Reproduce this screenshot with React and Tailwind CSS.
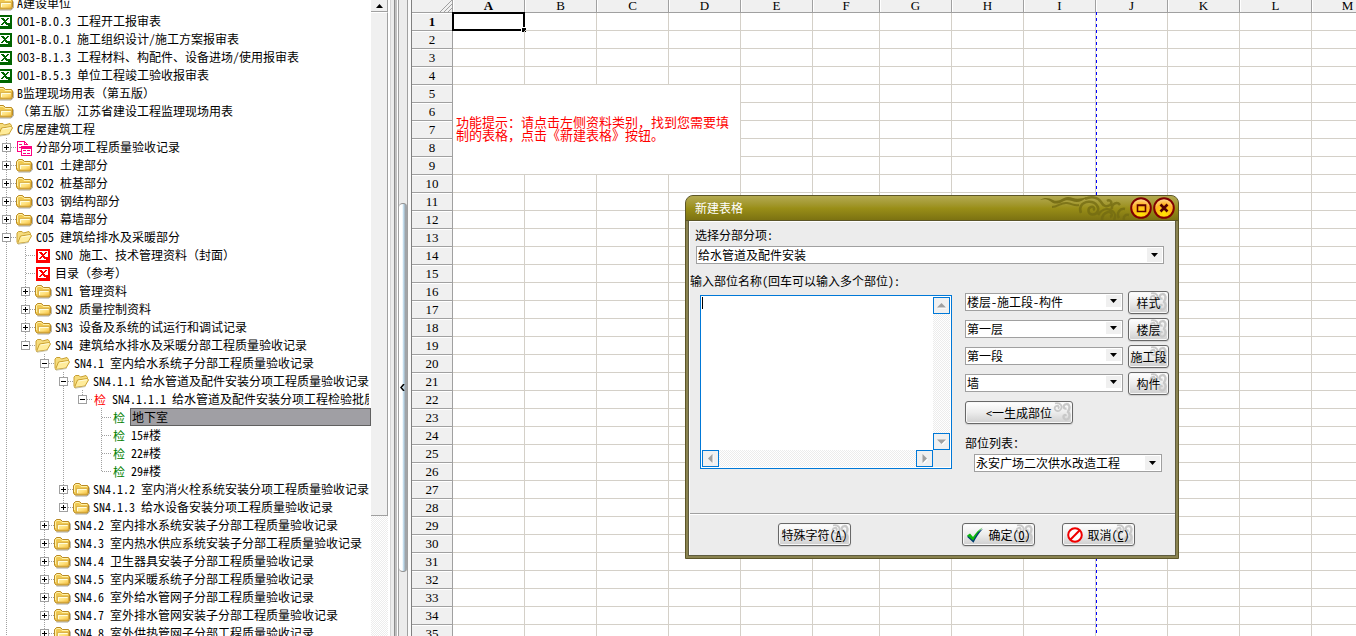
import React from "react";

/* guides: one character per indent cell
   "|" line, " " blank, "+"/"-" toggle, "t" tee, "l" corner; "p"/"m" = toggle with no line below */
const TREE = [
  ["", "folder", "A建设单位"],
  ["", "xls", "001-B.0.3 工程开工报审表"],
  ["", "xls", "001-B.0.1 施工组织设计/施工方案报审表"],
  ["", "xls", "003-B.1.3 工程材料、构配件、设备进场/使用报审表"],
  ["", "xls", "001-B.5.3 单位工程竣工验收报审表"],
  ["", "folder", "B监理现场用表（第五版）"],
  ["", "folder", "（第五版）江苏省建设工程监理现场用表"],
  ["", "open", "C房屋建筑工程"],
  ["+", "form", "分部分项工程质量验收记录"],
  ["+", "folder", "C01 土建部分"],
  ["+", "folder", "C02 桩基部分"],
  ["+", "folder", "C03 钢结构部分"],
  ["+", "folder", "C04 幕墙部分"],
  ["-", "open", "C05 建筑给排水及采暖部分"],
  ["|t", "redxls", "SN0 施工、技术管理资料（封面）"],
  ["|t", "redxls", "目录（参考）"],
  ["|+", "folder", "SN1 管理资料"],
  ["|+", "folder", "SN2 质量控制资料"],
  ["|+", "folder", "SN3 设备及系统的试运行和调试记录"],
  ["|m", "open", "SN4 建筑给水排水及采暖分部工程质量验收记录"],
  ["| -", "open", "SN4.1 室内给水系统子分部工程质量验收记录"],
  ["| |-", "open", "SN4.1.1 给水管道及配件安装分项工程质量验收记录"],
  ["| ||m", "redcheck", "SN4.1.1.1 给水管道及配件安装分项工程检验批质"],
  ["| || t", "check", "地下室", true],
  ["| || t", "check", "15#楼"],
  ["| || t", "check", "22#楼"],
  ["| || l", "check", "29#楼"],
  ["| |+", "folder", "SN4.1.2 室内消火栓系统安装分项工程质量验收记录"],
  ["| |p", "folder", "SN4.1.3 给水设备安装分项工程质量验收记录"],
  ["| +", "folder", "SN4.2 室内排水系统安装子分部工程质量验收记录"],
  ["| +", "folder", "SN4.3 室内热水供应系统安装子分部工程质量验收记录"],
  ["| +", "folder", "SN4.4 卫生器具安装子分部工程质量验收记录"],
  ["| +", "folder", "SN4.5 室内采暖系统子分部工程质量验收记录"],
  ["| +", "folder", "SN4.6 室外给水管网子分部工程质量验收记录"],
  ["| +", "folder", "SN4.7 室外排水管网安装子分部工程质量验收记录"],
  ["| +", "folder", "SN4.8 室外供热管网子分部工程质量验收记录"],
];

function Guide({ kind }) {
  const toggle = "+-pm".includes(kind);
  const down = "|t+-".includes(kind);
  const up = kind !== " ";
  const art = (
    <svg width="19" height="18" viewBox="0 0 19 18" shapeRendering="crispEdges" className="block" aria-hidden="true">
      <g stroke="#a0a0a0" strokeDasharray="1 1" fill="none">
        {up && <path d="M9.5 0V9" />}
        {down && <path d="M9.5 10V18" />}
        {up && kind !== "|" && <path d="M10 9.5H19" />}
      </g>
      {toggle && (
        <>
          <rect x="5.5" y="5.5" width="8" height="8" fill="#fff" stroke="#a0a0a0" />
          <path d={kind === "+" || kind === "p" ? "M7 9.5h5M9.5 7v5" : "M7 9.5h5"} stroke="#000" />
        </>
      )}
    </svg>
  );
  return toggle ? (
    <button type="button" aria-label="展开或折叠" className="shrink-0">{art}</button>
  ) : (
    <span className="shrink-0">{art}</span>
  );
}

function NodeIcon({ type }) {
  if (type === "check" || type === "redcheck") {
    return (
      <span className={"w-[19px] shrink-0 pl-[2px] pt-px " + (type === "check" ? "text-[#008000]" : "text-[#f00]")}>检</span>
    );
  }
  return (
    <svg width="19" height="18" viewBox="0 0 19 18" className="block shrink-0" aria-hidden="true">
      {type === "folder" && (
        <>
          <defs>
            <linearGradient id="folderFront" x1="0" y1="0" x2="1" y2="1">
              <stop offset="0" stopColor="#fff6b0" />
              <stop offset=".55" stopColor="#ffe07a" />
              <stop offset="1" stopColor="#f0b838" />
            </linearGradient>
          </defs>
          <path d="M2.500 16H14l2.300-2V7.500" fill="none" stroke="#a8a8a0" />
          <path d="M.5 13V5.500L2.500 3.500h4l2 2H14.500l1 1.500V13L14 15H2z" fill="#f0c850" stroke="#b98a24" />
          <path d="M1.500 12V6l1.300-1.500H6l2 2H14" fill="none" stroke="#fff2a8" />
          <path d="M3.500 14V8.500H14.500V13L13.500 14.300z" fill="url(#folderFront)" stroke="#c89830" strokeWidth=".6" />
          <path d="M4.500 13V9.500H13.500" fill="none" stroke="#fffcdc" />
        </>
      )}
      {type === "open" && (
        <>
          <path d="M1 14.500V5L2.500 3.500H6l1.500 1.500 5.500-1.500 1.500 2V8" fill="#f6dc7c" stroke="#c9a032" />
          <path d="M1.500 15.500L4.500 8 14.500 6.500 15.500 8 12 14z" fill="#ffec9a" stroke="#c9a032" />
          <path d="M5.500 9l8.500-1.300" stroke="#fffbd8" />
          <path d="M2 16.200L12.500 14.500" stroke="#c9c4a8" />
        </>
      )}
      {(type === "xls" || type === "redxls") && (
        <g shapeRendering="crispEdges">
          <rect x="1" y="3" width="14" height="14" fill={type === "xls" ? "#006400" : "#f00"} />
          <rect x="3" y="5" width="10" height="9" fill="#fff" />
          <path d="M4 6h3v1h1v1h1v-1h1v-1h2v1h-1v1h-1v1h-1v1h1v1h1v1h1v1h-3v-1h-1v-1h-1v1h-1v1h-2v-1h1v-1h1v-1h1v-1h-1v-1h-1v-1h-1z" fill={type === "xls" ? "#006400" : "#f00"} />
          <rect x="11" y="11" width="3" height="4" fill={type === "xls" ? "#006400" : "#f00"} />
        </g>
      )}
      {type === "form" && (
        <g fill="none" stroke="#ff0080" shapeRendering="crispEdges">
          <path d="M5 13.500H1.500V3.500H8.500l3 3" />
          <path d="M8.500 3.500v3h3M3 6.500h3M3 9.500h2" />
          <rect x="5.500" y="8.500" width="10" height="9" fill="#fff" />
          <path d="M5 10h11" strokeWidth="2" />
          <path d="M7 12.500h3M11 12.500h3M7 15.500h3M11 15.500h3" />
        </g>
      )}
    </svg>
  );
}

function TreePanel() {
  return (
    <nav className="w-[371px] shrink-0 overflow-hidden bg-white" aria-label="资料类别">
      <ul className="-ml-[3px] -mt-[6px]">
        {TREE.map(([guides, type, label, selected]) => (
          <li key={label} className="flex h-[18px] items-center">
            {guides.split("").map((g, i) => (
              <Guide key={i} kind={g} />
            ))}
            <NodeIcon type={type} />
            <span
              className={
                selected
                  ? "h-[18px] flex-1 border border-[#606060] bg-[#a09fa4] pl-px leading-4"
                  : "mr-[2px] flex-1 overflow-hidden pl-px"
              }
            >
              {label}
            </span>
          </li>
        ))}
      </ul>
    </nav>
  );
}

const DITHER = "bg-[repeating-conic-gradient(#ffffff_0_25%,#ececec_0_50%)] bg-[length:2px_2px]";

function TreeScrollbar() {
  return (
    <div className="flex w-[17px] shrink-0 flex-col bg-[#f0f0f0]">
      <button type="button" aria-label="向上" className="flex h-[12px] shrink-0 items-center justify-center border-b border-r border-[#a0a0a0] bg-[#f0f0f0]">
        <svg width="7" height="4" viewBox="0 0 7 4" aria-hidden="true"><path d="M0 4L3.500 0 7 4z" /></svg>
      </button>
      <div className="basis-[504px] border-b border-r border-t border-[#a0a0a0] border-t-white bg-[#f0f0f0]" />
      <div className={"flex-1 " + DITHER} />
    </div>
  );
}

function Splitter() {
  return (
    <div className="flex w-[24px] shrink-0 bg-[#ececec]">
      <div className="w-[2px] bg-white" />
      <div className="w-[1px] bg-[#d4d4d4]" />
      <div className="w-[3px]" />
      <div className="w-[1px] bg-[#8c8c8c]" />
      <div className="w-[2px] bg-[#c0c0c0]" />
      <div className="w-[1px] bg-white" />
      <div className="flex w-[10px] flex-col border-x border-[#a0a0a0] bg-[#ececec] pt-[203px]">
        <div className="flex basis-[369px] items-center rounded-sm border-y border-[#909090] bg-linear-to-r from-white from-40% via-[#b4d4e8] via-60% to-[#a0a4a8] to-80%">
          <svg width="5" height="7" viewBox="0 0 5 7" className="ml-[1px]" aria-hidden="true">
            <path d="M4 0L1 3.500 4 7" fill="none" stroke="#000" strokeWidth="1.500" />
          </svg>
        </div>
      </div>
      <div className="w-[3px] bg-[#fafafa]" />
      <div className="w-[1px] bg-[#808080]" />
    </div>
  );
}

const COLS = "ABCDEFGHIJKLM".split("");
const ROWS = Array.from({ length: 35 }, (_, i) => i + 1);

function Sheet() {
  return (
    <main className="relative min-w-0 flex-1 overflow-hidden bg-white">
      <table className="w-[972px] table-fixed border-separate border-spacing-0 text-center">
        <colgroup>
          <col className="w-[41px]" />
          {COLS.map((c) => (
            <col key={c} className={c === "F" ? "w-[67px]" : "w-[72px]"} />
          ))}
        </colgroup>
        <thead>
          <tr className="h-[13px]">
            <th className="border-b border-r border-[#a0a0a0] bg-[#f0f0f0] p-0">
              <svg width="12" height="12" viewBox="0 0 12 12" className="ml-auto block" stroke="#a0a0a0" aria-hidden="true">
                <path d="M0 12L12 0M4 12L12 4M8 12L12 8" />
              </svg>
            </th>
            {COLS.map((c) => (
              <th
                key={c}
                scope="col"
                className={
                  "border-b border-r border-[#a0a0a0] bg-[#f0f0f0] p-0 font-['Liberation_Serif',serif] text-[13px] leading-3 shadow-[inset_1px_0_0_#fff] " +
                  (c === "A" ? "font-bold" : "font-normal")
                }
              >
                {c}
              </th>
            ))}
          </tr>
        </thead>
        <tbody>
          {ROWS.map((r) => (
            <tr key={r} className="h-[18px]">
              <th
                scope="row"
                className={
                  "border-b border-r border-[#a0a0a0] bg-[#f0f0f0] p-0 font-['Liberation_Serif',serif] text-[13px] leading-4 shadow-[inset_0_1px_0_#fff] " +
                  (r === 1 ? "font-bold" : "font-normal")
                }
              >
                {r}
              </th>
              {COLS.map((c, i) => {
                if (r >= 5 && r <= 9 && i < 4) {
                  return r === 5 && i === 0 ? (
                    <td key={c} rowSpan={5} colSpan={4} className="border-b border-r border-[#d4d0c8] p-0 pb-[4px] pl-[3px] text-left text-[13px] leading-[13px] text-[#f00]">
                      功能提示：请点击左侧资料类别，找到您需要填
                      <br />
                      制的表格，点击《新建表格》按钮。
                    </td>
                  ) : null;
                }
                return (
                  <td key={c} className="relative border-b border-r border-[#d4d0c8] p-0">
                    {r === 1 && i === 0 && (
                      <span className="absolute -inset-x-px -inset-y-px border-2 border-black">
                        <span className="absolute -bottom-[3px] -right-[3px] size-[5px] border-l border-t border-white bg-black" />
                      </span>
                    )}
                  </td>
                );
              })}
            </tr>
          ))}
        </tbody>
      </table>
      <div className="absolute bottom-0 left-[684px] top-[12px] w-px bg-[repeating-linear-gradient(#0000ff_0_3px,#ffffff_3px_6px)]" />
    </main>
  );
}

function Combo({ id, label, value, className }) {
  return (
    <div className={"relative " + className}>
      <select id={id} aria-label={label} defaultValue={value} className="block h-[18px] w-full appearance-none border border-[#a0a0a0] bg-white pl-px pr-4 leading-4 text-black outline-none">
        <option>{value}</option>
      </select>
      <span className="pointer-events-none absolute bottom-[2px] right-[2px] top-[2px] flex w-[15px] items-center justify-center bg-[#f0f0f0]">
        <svg width="7" height="4" viewBox="0 0 7 4" aria-hidden="true"><path d="M0 0h7L3.500 4z" /></svg>
      </span>
    </div>
  );
}

function SkinButton({ children, className }) {
  return (
    <button
      type="button"
      className={
        "relative flex h-[23px] items-center justify-center rounded-[3px] border border-[#686868] bg-linear-to-b from-white via-[#ececec] to-[#cfcfcf] text-black shadow-[inset_0_0_0_1px_#f8f8f8,0_1px_1px_#d0d0d0] " +
        className
      }
    >
      <svg width="20" height="19" viewBox="0 0 20 19" className="absolute right-0 top-0" fill="none" stroke="#c8c8c8" aria-hidden="true">
        <path d="M6 6.500C7.500 5.500 6.500 3.500 4.800 3.800 2.500 4.200 1.800 7 4 8.500c2.500 1.500 6-.5 5.500-4C9.300 2 6 .5 3 1.500" strokeWidth="1.800" />
        <path d="M14.500 6.500c-2 .5-3.500-1-2.500-3 1-1.800 4-2 5 0 1.500 2.500-.5 4.500-1 6.500 2 1.500 2 4.500.5 6.500-2 2-5 1-5-1.500 0-2 2-2.500 2.500-1" strokeWidth="2.400" />
      </svg>
      <span className="relative flex items-center gap-[4px] whitespace-nowrap">{children}</span>
    </button>
  );
}

function ScrollArrow({ d, label }) {
  return (
    <button type="button" aria-label={label} className="flex size-[17px] shrink-0 items-center justify-center border border-[#0078d7] bg-[#f0f0f0]">
      <svg width="11" height="11" viewBox="0 0 11 11" aria-hidden="true">
        <path d={d} fill="#fff" transform="translate(1 1)" />
        <path d={d} fill="#a0a0a0" />
      </svg>
    </button>
  );
}

function TitleButton({ label, children }) {
  return (
    <button type="button" aria-label={label} className="block size-[22px]">
      <svg width="22" height="22" viewBox="0 0 22 22" aria-hidden="true">
        <defs>
          <radialGradient id={"g" + label} cx=".5" cy=".8" r=".8">
            <stop offset="0" stopColor="#ffe800" />
            <stop offset=".6" stopColor="#ffb020" />
            <stop offset="1" stopColor="#ffe0a0" />
          </radialGradient>
        </defs>
        <circle cx="11" cy="11" r="9.800" fill={`url(#g${label})`} stroke="#800000" strokeWidth="2" />
        {children}
      </svg>
    </button>
  );
}

const PARTS = [
  ["楼层-施工段-构件", "样式"],
  ["第一层", "楼层"],
  ["第一段", "施工段"],
  ["墙", "构件"],
];

function Dialog() {
  return (
    <section role="dialog" aria-label="新建表格" className="absolute left-[685px] top-[195px] w-[494px] overflow-hidden rounded-t-lg border border-[#5c5628] bg-[#8a8350]">
      <header className="relative flex h-[25px] items-center border-b border-[#5c5628] bg-linear-to-b from-[#b4aa50] via-[#9a8f18] to-[#7c7212] pl-[9px] pr-[3px]">
        <svg width="104" height="24" viewBox="0 0 104 24" className="absolute right-[34px] top-0" fill="none" stroke="#716912" strokeOpacity=".75" aria-hidden="true">
          <path d="M0 4c5-3 9-2 13 0s7 0 11-2c3-1.500 6-1 9 0s8 1 14-1c-5 5-10 6-15 4-4-1.500-7-1-10 1-4 2.500-9 2-12-1-3-2-6-2-10-1z" fill="#716912" stroke="none" fillOpacity=".85" />
          <path d="M12 11c6 0 9-5 15-4s7 3 12 2" strokeWidth="2" />
          <path d="M53 14c2-1 1-4-2-3-4 1.500-3 7 1 7.500 5 .5 8-5 5-9C53 4 44 5 41 10c-1 2-1 5 0 7" strokeWidth="2.500" />
          <path d="M45 3c6-3 13-2 16 3s6 5 9 3c3-2.500 0-6-3-4" strokeWidth="2.500" />
          <path d="M62 24c0-4 2-7 6-8 4-.5 5 4 2 5M58 19c3-5 8-7 13-5 4 2 5 6 3 10M72 13c-1-5 5-8 8-4M79 22c-3-5 1-10 6-9M84 24c-1-4 2-6 5-5" strokeWidth="2.500" />
        </svg>
        <h2 className="flex-1 text-white">新建表格</h2>
        <div className="relative flex gap-px">
          <TitleButton label="最大化"><path d="M7.500 8h8v6.500h-8zM7 8.500h9" fill="none" stroke="#600000" strokeWidth="1.600" /></TitleButton>
          <TitleButton label="关闭"><path d="M7.500 7.500l7 7M14.500 7.500l-7 7" stroke="#500000" strokeWidth="2.600" /></TitleButton>
        </div>
      </header>
      <div className="mx-[2px] mb-[2px] border border-t-0 border-[#5e5c40]">
        <div className="border border-r-0 border-b-0 border-white bg-[#ececec]">
          <label htmlFor="item" className="block pl-[5px] pt-[4px]">选择分部分项:</label>
          <Combo id="item" value="给水管道及配件安装" className="ml-[6px] mr-[11px] mt-[2px]" />
          <label htmlFor="names" className="mt-[8px] block">输入部位名称(回车可以输入多个部位):</label>
          <div className="flex gap-[13px] pl-[10px] pr-[5px]">
            <div className="relative mt-[5px] grid h-[174px] w-[252px] shrink-0 grid-cols-[1fr_17px] grid-rows-[1fr_17px] border border-[#0078d7] bg-white p-px">
              <textarea id="names" className="block size-full resize-none overflow-hidden bg-white outline-none" />
              <span className="absolute left-[1px] top-[1px] h-[12px] w-px bg-black" />
              <div className={"flex flex-col justify-between " + DITHER}>
                <ScrollArrow label="向上" d="M1 7.500h9L5.500 3z" />
                <ScrollArrow label="向下" d="M1 3.500h9L5.500 8z" />
              </div>
              <div className={"flex justify-between " + DITHER}>
                <ScrollArrow label="向左" d="M7.500 1v9L3 5.500z" />
                <ScrollArrow label="向右" d="M3.500 1v9L8 5.500z" />
              </div>
              <div className="bg-[#ececec]" />
            </div>
            <div className="mt-px flex-1">
              <div className="grid gap-[4px]">
                {PARTS.map(([value, action]) => (
                  <div key={action} className="flex gap-[5px]">
                    <Combo label={action} value={value} className="w-[158px] pt-[2px] [&>span]:top-[4px] [&>span]:bottom-[7px]" />
                    <SkinButton className="w-[41px]">{action}</SkinButton>
                  </div>
                ))}
              </div>
              <SkinButton className="mt-[6px] w-[108px]">&lt;一生成部位</SkinButton>
              <label htmlFor="list" className="mt-[10px] block">部位列表：</label>
              <Combo id="list" value="永安广场二次供水改造工程" className="ml-[9px] mt-[2px] w-[188px]" />
            </div>
          </div>
          <footer className="mt-[41px] flex justify-between border-t border-[#a0a0a0] py-[9px] pl-[88px] pr-[40px] shadow-[inset_0_1px_0_#fff]">
            <SkinButton className="w-[73px]">
              <span>特殊字符(<u>A</u>)</span>
            </SkinButton>
            <div className="flex gap-[27px]">
              <SkinButton className="w-[73px]">
                <svg width="18" height="16" viewBox="0 0 18 16" aria-hidden="true">
                  <path d="M1 9l3-2 3 3.500C10 6 13 3 17 1 13 5 10 10 7.500 15z" fill="#003c70" transform="translate(0 .8)" />
                  <path d="M1 8.500l3-2 3 3.500C10 5.500 13 2.500 16.500.5 12.500 4.500 9.500 9 7.200 13.500z" fill="#0cb80c" />
                </svg>
                <span>确定(<u>O</u>)</span>
              </SkinButton>
              <SkinButton className="w-[73px]">
                <svg width="16" height="16" viewBox="0 0 16 16" fill="none" stroke="#f00000" strokeWidth="2" aria-hidden="true">
                  <circle cx="8" cy="8" r="6.800" fill="#fff" />
                  <path d="M3.300 12.700l9.400-9.400" />
                </svg>
                <span>取消(<u>C</u>)</span>
              </SkinButton>
            </div>
          </footer>
        </div>
      </div>
    </section>
  );
}

export default function App() {
  return (
    <div className="relative flex h-screen overflow-hidden bg-white font-['Noto_Sans_Mono_CJK_SC','Noto_Sans_CJK_SC',monospace] text-[12px] leading-[18px] whitespace-nowrap text-black">
      <TreePanel />
      <TreeScrollbar />
      <Splitter />
      <Sheet />
      <Dialog />
    </div>
  );
}
